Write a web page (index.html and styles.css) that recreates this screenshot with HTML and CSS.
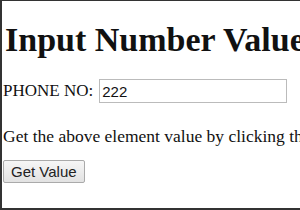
FILE: index.html
```html
<!DOCTYPE html>
<html lang="en">
<head>
    <meta charset="UTF-8">
    <title>Input Number Value</title>
    <link rel="stylesheet" href="styles.css">
</head>
<body>
    <div class="frame">
        <h1 class="title">Input Number Value</h1>
        <div class="field-row">
            <label for="phone">PHONE NO:</label>
            <input type="number" id="phone" class="phone-input" value="222">
        </div>
        <p class="hint">Get the above element value by clicking the button below.</p>
        <button class="get-btn" onclick="alert(document.getElementById('phone').value)">Get Value</button>
    </div>
</body>
</html>
```

FILE: styles.css
```css
html, body { margin: 0; height: 100%; background: #fff; }
body { overflow: hidden; font-family: "Liberation Serif", "Times New Roman", serif; color: #111; }
.frame { box-sizing: border-box; height: 210px; width: 300px; border-top: 1px solid #333; border-left: 2px solid #333; border-bottom: 2px solid #333; padding: 0 0 0 1px; white-space: nowrap; overflow: hidden; }
.title { font-size: 34px; font-weight: bold; margin: 20px 0 0 2px; line-height: 38px; }
.field-row { margin-top: 20px; display: flex; align-items: center; font-size: 17px; }
.field-row label { margin-right: 6px; }
.phone-input { width: 182px; height: 22px; padding: 0 2px; border: 1px solid #bbb; font-family: "Liberation Sans", Arial, sans-serif; font-size: 15px; color: #111; -moz-appearance: textfield; }
.phone-input::-webkit-inner-spin-button, .phone-input::-webkit-outer-spin-button { -webkit-appearance: none; margin: 0; }
.hint { font-size: 17.5px; margin: 23px 0 0 0; overflow: hidden; }
.get-btn { margin-top: 13px; font-family: "Liberation Sans", Arial, sans-serif; font-size: 15px; color: #222; padding: 2px 7px; background: linear-gradient(#f6f6f6, #e2e2e2); border: 1px solid #aaa; border-radius: 2px; }
```
